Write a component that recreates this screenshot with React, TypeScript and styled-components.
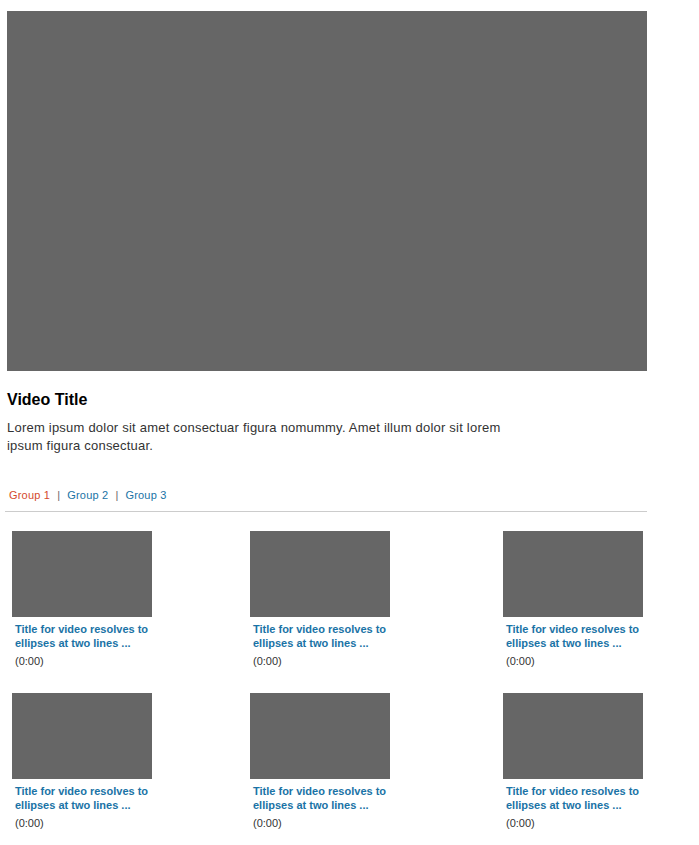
import React from "react";
import styled, { createGlobalStyle } from "styled-components";

const Global = createGlobalStyle`
  body {
    margin: 0;
    background: #ffffff;
    font-family: "Liberation Sans", Arial, Helvetica, sans-serif;
  }
`;

const Page = styled.div`
  width: 642px;
  padding: 11px 0 20px 5px;
`;

const Player = styled.div`
  width: 640px;
  height: 360px;
  margin-left: 2px;
  background: #666666;
`;

const Info = styled.div`
  padding-left: 2px;
  margin-top: 20px;
`;

const Title = styled.h1`
  margin: 0;
  font-size: 16px;
  line-height: 18px;
  font-weight: bold;
  color: #000000;
`;

const Description = styled.p`
  margin: 10px 0 0;
  width: 515px;
  font-size: 13px;
  line-height: 18px;
  letter-spacing: 0.22px;
  color: #333333;
`;

const Tabs = styled.nav`
  display: flex;
  align-items: center;
  margin-top: 33px;
  padding: 0 0 9px 4px;
  border-bottom: 1px solid #cccccc;
  font-size: 11px;
  line-height: 14px;
  letter-spacing: 0.2px;
`;

const Tab = styled.a<{ $active?: boolean }>`
  color: ${(p) => (p.$active ? "#d44a2e" : "#1a73a6")};
  text-decoration: none;
  cursor: pointer;
`;

const Sep = styled.span`
  color: #666666;
  margin: 0 7px;
`;

const Grid = styled.div`
  display: grid;
  grid-template-columns: 238px 253px 140px;
  row-gap: 25px;
  margin-top: 19px;
  padding-left: 7px;
`;

const Card = styled.div`
  display: flex;
  flex-direction: column;
  width: 140px;
`;

const Thumb = styled.div`
  width: 140px;
  height: 86px;
  background: #666666;
`;

const CardTitle = styled.a`
  margin-top: 5px;
  padding-left: 3px;
  font-size: 11px;
  line-height: 14px;
  font-weight: bold;
  color: #1a73a6;
  text-decoration: none;
  display: -webkit-box;
  -webkit-line-clamp: 2;
  -webkit-box-orient: vertical;
  overflow: hidden;
`;

const Duration = styled.span`
  margin-top: 4px;
  padding-left: 3px;
  font-size: 11px;
  line-height: 14px;
  color: #333333;
`;

const videos = Array.from({ length: 6 }, (_, i) => i);

export default function App() {
  return (
    <>
      <Global />
      <Page>
        <Player />
        <Info>
          <Title>Video Title</Title>
          <Description>
            Lorem ipsum dolor sit amet consectuar figura nomummy. Amet illum dolor sit lorem
            ipsum figura consectuar.
          </Description>
        </Info>
        <Tabs>
          <Tab $active>Group 1</Tab>
          <Sep>|</Sep>
          <Tab>Group 2</Tab>
          <Sep>|</Sep>
          <Tab>Group 3</Tab>
        </Tabs>
        <Grid>
          {videos.map((v) => (
            <Card key={v}>
              <Thumb />
              <CardTitle>Title for video resolves to ellipses at two lines ...</CardTitle>
              <Duration>(0:00)</Duration>
            </Card>
          ))}
        </Grid>
      </Page>
    </>
  );
}
